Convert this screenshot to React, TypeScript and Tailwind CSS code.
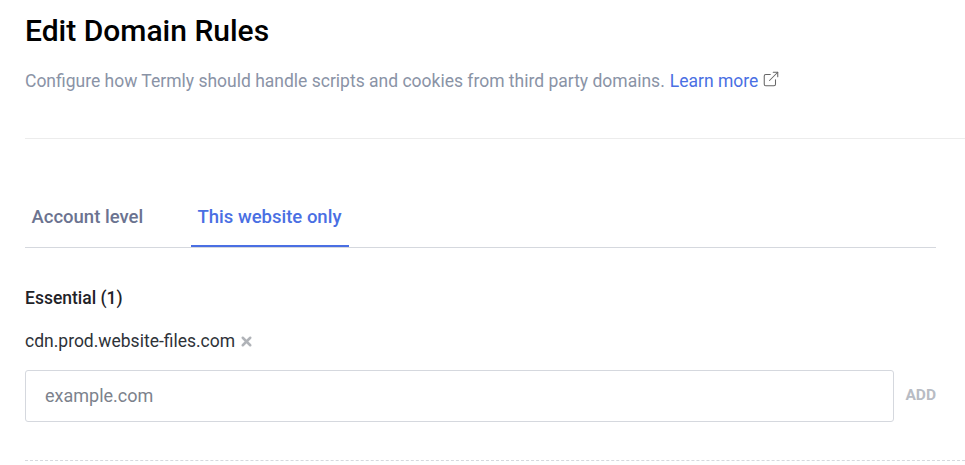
import { ExternalLink, X } from 'lucide-react';

const App = () => {
  return (
    <div className="w-[965px] h-[465px] overflow-hidden bg-white pl-[25px] font-['Roboto',sans-serif]">
      <h1 className="pt-[13px] text-[30px] leading-[36px] font-medium text-black">Edit Domain Rules</h1>
      <p className="mt-[19px] flex items-center text-[17.5px] leading-[26px] text-[#8a93a6]">
        Configure how Termly should handle scripts and cookies from third party domains.
        <a className="ml-[5px] text-[#4a6fe3]">Learn more</a>
        <ExternalLink className="ml-[4px] mb-[4px] h-[18px] w-[18px] text-[#666666]" strokeWidth={1.4} />
      </p>
      <div className="mt-[44px] h-px bg-[#ececec]" />

      <div className="mt-[55px] mr-[29px] flex h-[54px] items-stretch border-b border-[#d5d8de] text-[18.5px] font-medium">
        <div className="flex w-[166px] items-center pb-[6px] pl-[6.5px] text-[#6b7390]">Account level</div>
        <div className="flex w-[158px] items-center justify-center border-b-2 border-[#4a6fe3] pb-[4px] pr-[1px] text-[#4a6fe3]">
          This website only
        </div>
      </div>

      <h2 className="mt-[38px] text-[17.5px] leading-[24px] font-medium text-[#1f2328]">Essential (1)</h2>
      <div className="mt-[19px] flex items-center text-[17.5px] leading-[24px] text-[#2e3238]">
        cdn.prod.website-files.com
        <X className="ml-[4px] h-[15px] w-[15px] text-[#b0b3b8]" strokeWidth={4} />
      </div>

      <div className="mt-[17px] mr-[29px] flex items-center">
        <input
          placeholder="example.com"
          className="h-[52px] w-[869px] rounded-[3px] border border-[#d5d8de] px-[19px] pb-[2px] text-[18px] outline-none placeholder:text-[#7c828c]"
        />
        <span className="ml-auto text-[15.5px] font-bold text-[#b8bcc4]">ADD</span>
      </div>

      <div className="mt-[38px] border-t border-dashed border-[#d5d8de]" />
    </div>
  );
};

export default App;
